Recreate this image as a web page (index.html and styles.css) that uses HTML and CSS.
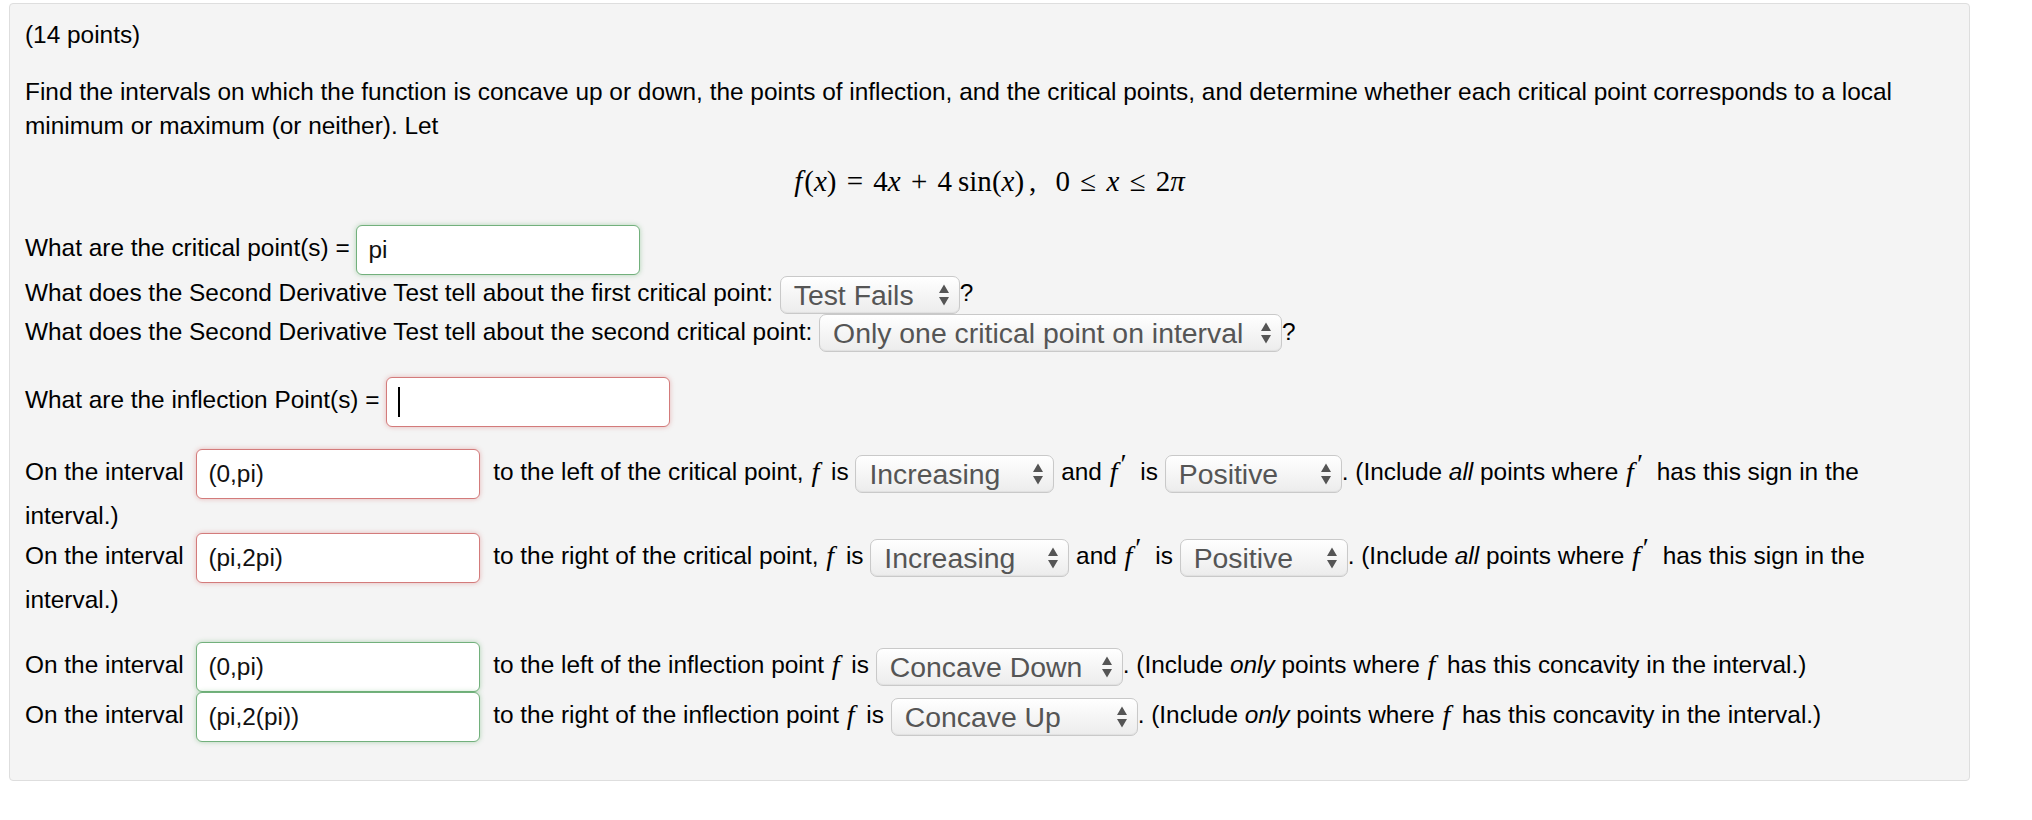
FILE: index.html
```html
<!DOCTYPE html>
<html lang="en">
<head>
    <meta charset="UTF-8">
    <link rel="stylesheet" href="styles.css">
    <title>Problem</title>
</head>
<body>

    <div class="problem">
        <div class="points">(14 points)</div>

        <div class="intro">
            Find the intervals on which the function is concave up or down, the points of inflection, and the critical points, and determine whether each critical point corresponds to a local minimum or maximum (or neither). Let
        </div>

        <div class="formula">
            <span class="mi f">f</span>(<span class="mi">x</span>) <span class="op">=</span> 4<span class="mi">x</span> <span class="op">+</span> 4<span class="fn">sin</span>(<span class="mi">x</span>)<span class="comma">,</span> 0 <span class="op">≤</span> <span class="mi">x</span> <span class="op">≤</span> 2<span class="mi">π</span>
        </div>

        <div class="row">
            What are the critical point(s) = <span class="answer correct">pi</span>
        </div>
        <div class="row sel-row">
            What does the Second Derivative Test tell about the first critical point:
            <span class="select w-fails">Test Fails<svg class="arrows" width="12" height="24" viewBox="0 0 12 24"><path d="M6 1.5 L11 10 H1 Z M6 22.5 L11 14 H1 Z" fill="#555"/></svg></span>?
        </div>
        <div class="row sel-row">
            What does the Second Derivative Test tell about the second critical point:
            <span class="select w-only">Only one critical point on interval<svg class="arrows" width="12" height="24" viewBox="0 0 12 24"><path d="M6 1.5 L11 10 H1 Z M6 22.5 L11 14 H1 Z" fill="#555"/></svg></span>?
        </div>

        <div class="row gap-infl">
            What are the inflection Point(s) = <span class="answer wrong"><span class="caret"></span></span>
        </div>

        <div class="row gap-int">
            On the interval <span class="answer wrong spaced">(0,pi)</span> to the left of the critical point, <span class="mi small">f</span> is
            <span class="select w-inc">Increasing<svg class="arrows" width="12" height="24" viewBox="0 0 12 24"><path d="M6 1.5 L11 10 H1 Z M6 22.5 L11 14 H1 Z" fill="#555"/></svg></span>
            and <span class="mi small">f</span><span class="prime">′</span> is
            <span class="select w-pos">Positive<svg class="arrows" width="12" height="24" viewBox="0 0 12 24"><path d="M6 1.5 L11 10 H1 Z M6 22.5 L11 14 H1 Z" fill="#555"/></svg></span>. (Include <em>all</em> points where <span class="mi small">f</span><span class="prime">′</span> has this sign in the interval.)
        </div>
        <div class="row">
            On the interval <span class="answer wrong spaced">(pi,2pi)</span> to the right of the critical point, <span class="mi small">f</span> is
            <span class="select w-inc">Increasing<svg class="arrows" width="12" height="24" viewBox="0 0 12 24"><path d="M6 1.5 L11 10 H1 Z M6 22.5 L11 14 H1 Z" fill="#555"/></svg></span>
            and <span class="mi small">f</span><span class="prime">′</span> is
            <span class="select w-pos2">Positive<svg class="arrows" width="12" height="24" viewBox="0 0 12 24"><path d="M6 1.5 L11 10 H1 Z M6 22.5 L11 14 H1 Z" fill="#555"/></svg></span>. (Include <em>all</em> points where <span class="mi small">f</span><span class="prime">′</span> has this sign in the interval.)
        </div>

        <div class="row gap-conc">
            On the interval <span class="answer correct spaced">(0,pi)</span> to the left of the inflection point <span class="mi small">f</span> is
            <span class="select w-conc">Concave Down<svg class="arrows" width="12" height="24" viewBox="0 0 12 24"><path d="M6 1.5 L11 10 H1 Z M6 22.5 L11 14 H1 Z" fill="#555"/></svg></span>. (Include <em>only</em> points where <span class="mi small">f</span> has this concavity in the interval.)
        </div>
        <div class="row">
            On the interval <span class="answer correct spaced">(pi,2(pi))</span> to the right of the inflection point <span class="mi small">f</span> is
            <span class="select w-conc">Concave Up<svg class="arrows" width="12" height="24" viewBox="0 0 12 24"><path d="M6 1.5 L11 10 H1 Z M6 22.5 L11 14 H1 Z" fill="#555"/></svg></span>. (Include <em>only</em> points where <span class="mi small">f</span> has this concavity in the interval.)
        </div>
    </div>

</body>
</html>
```

FILE: styles.css
```css
body {
    margin: 0;
    background: #fff;
    font-family: "Liberation Sans", Arial, sans-serif;
    color: #000;
}

.problem {
    margin: 3px 0 0 9px;
    width: 1961px;
    box-sizing: border-box;
    padding: 14px 60px 38px 15px;
    background: #f4f4f4;
    border: 1px solid #dedede;
    border-radius: 4px;
    font-size: 24.4px;
    line-height: 34px;
}

.intro {
    margin-top: 23px;
}

.formula {
    margin: 18px -45px 24px 0;
    height: 40px;
    line-height: 40px;
    text-align: center;
    font-family: "Liberation Serif", "Times New Roman", serif;
    font-size: 29px;
}

.formula .op {
    margin: 0 3px;
}

.formula .fn {
    margin-left: 6px;
}

.formula .f {
    margin-right: 2px;
}

.formula .comma {
    margin: 0 12px 0 5px;
}

.mi {
    font-family: "Liberation Serif", "Times New Roman", serif;
    font-style: italic;
}

.mi.small {
    font-size: 28px;
    line-height: 1;
    margin: 0 5px 0 1px;
}

.prime {
    display: inline-block;
    font-family: "Liberation Serif", "Times New Roman", serif;
    font-size: 28px;
    line-height: 20px;
    vertical-align: 8px;
    margin: 0 7px 0 -2px;
}

.row.sel-row {
    line-height: 36px;
}

.row.gap-infl {
    margin-top: 25px;
}

.row.gap-int {
    margin-top: 22px;
}

.row.gap-conc {
    margin-top: 25px;
}

.answer {
    display: inline-flex;
    align-items: center;
    vertical-align: middle;
    box-sizing: border-box;
    width: 284px;
    height: 50px;
    padding: 0 11px;
    background: #fff;
    border: 1px solid #ccc;
    border-radius: 6px;
    color: #111;
}

.answer.spaced {
    margin: 0 6px;
}

.answer.correct {
    border-color: #72b07c;
    box-shadow: 0 0 5px rgba(92, 170, 100, 0.45);
}

.answer.wrong {
    border-color: #d37b7b;
    box-shadow: 0 0 5px rgba(210, 90, 90, 0.4);
}

.caret {
    display: inline-block;
    width: 2px;
    height: 30px;
    background: #000;
}

.select {
    display: inline-flex;
    align-items: center;
    justify-content: space-between;
    vertical-align: middle;
    box-sizing: border-box;
    height: 38px;
    padding: 0 9px 0 13px;
    background: linear-gradient(#ffffff, #ececec);
    border: 1px solid #c9c9c9;
    border-radius: 7px;
    box-shadow: inset 0 -1px 1px rgba(0, 0, 0, 0.05);
    color: #555;
    font-size: 28.4px;
    line-height: 36px;
}

.arrows {
    flex: none;
    margin-left: 8px;
}

.w-fails { width: 180px; }
.w-only { width: 463px; }
.w-inc { width: 199px; }
.w-pos { width: 177px; }
.w-pos2 { width: 168px; }
.w-conc { width: 247px; }
```
